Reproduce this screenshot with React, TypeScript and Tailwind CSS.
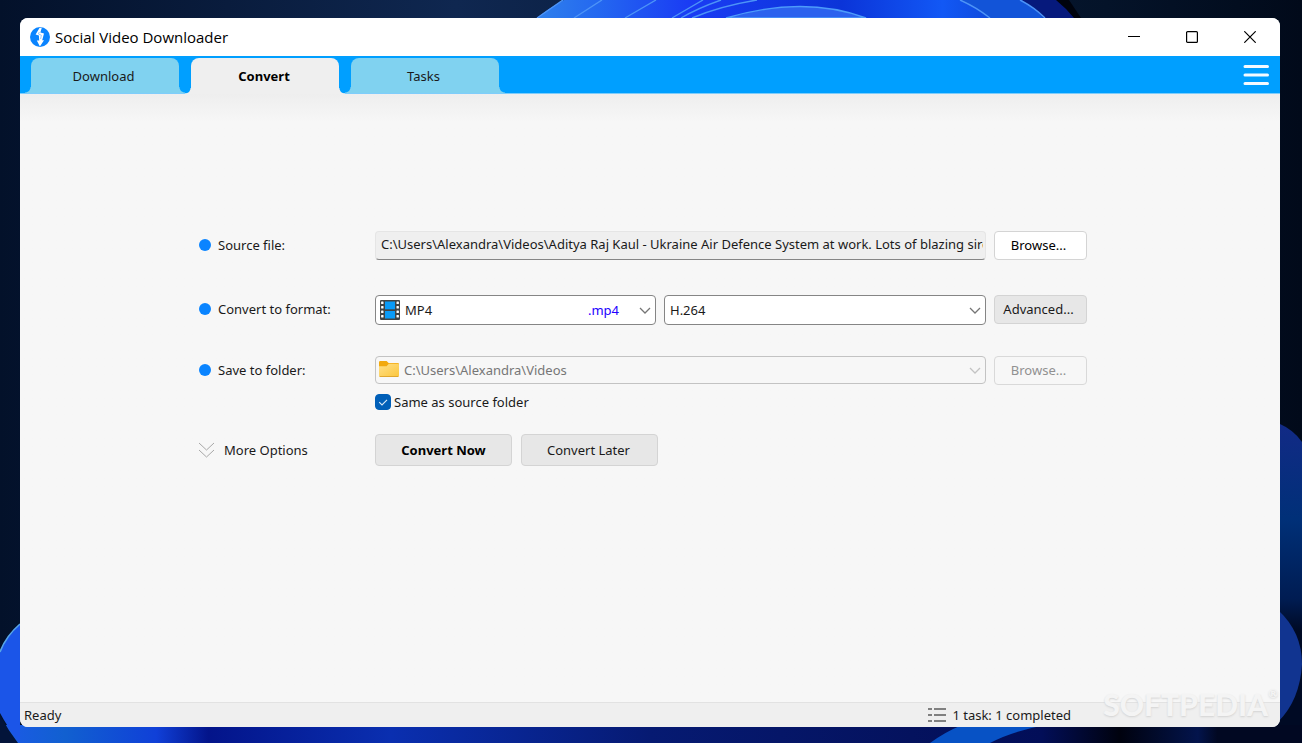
import { useState, type ReactNode } from "react";

const tabs = ["Download", "Convert", "Tasks"];

function Wallpaper() {
  return (
    <svg
      className="absolute inset-0 h-full w-full"
      viewBox="0 0 1302 743"
      preserveAspectRatio="none"
      aria-hidden="true"
    >
      <defs>
        <linearGradient id="night" x1="0" x2="1" y1="0" y2="0">
          <stop offset="0" stopColor="#03112a" />
          <stop offset="0.35" stopColor="#0f2750" />
          <stop offset="0.55" stopColor="#0a1d3e" />
          <stop offset="0.85" stopColor="#041329" />
          <stop offset="1" stopColor="#010a1a" />
        </linearGradient>
        <linearGradient id="petal" x1="0" x2="1" y1="0" y2="0">
          <stop offset="0" stopColor="#2f80ec" />
          <stop offset="0.12" stopColor="#2468f0" />
          <stop offset="0.3" stopColor="#1a3cf4" />
          <stop offset="0.6" stopColor="#0b34d8" />
          <stop offset="0.8" stopColor="#1258f5" />
          <stop offset="1" stopColor="#0b3ac0" />
        </linearGradient>
        <linearGradient id="floor" x1="0" x2="1" y1="0" y2="0">
          <stop offset="0" stopColor="#1c5ae8" />
          <stop offset="0.05" stopColor="#1160d0" />
          <stop offset="0.12" stopColor="#1040d8" />
          <stop offset="0.16" stopColor="#03148a" />
          <stop offset="0.3" stopColor="#0a2fb0" />
          <stop offset="0.5" stopColor="#061a72" />
          <stop offset="0.7" stopColor="#04125e" />
          <stop offset="0.8" stopColor="#020e58" />
          <stop offset="0.86" stopColor="#00020e" />
          <stop offset="0.92" stopColor="#03144c" />
          <stop offset="0.935" stopColor="#010822" />
          <stop offset="1" stopColor="#010822" />
        </linearGradient>
        <linearGradient id="side" x1="0" x2="0" y1="0" y2="1">
          <stop offset="0" stopColor="#122a86" />
          <stop offset="0.3" stopColor="#003078" />
          <stop offset="0.55" stopColor="#001c52" />
          <stop offset="0.65" stopColor="#000a24" />
          <stop offset="1" stopColor="#000a24" />
        </linearGradient>
      </defs>
      <rect width="1302" height="743" fill="url(#night)" />
      <path d="M1040 0h29l12 18h-41Z" fill="#00030d" />
      <path d="M1010 0h46q10 8 18 18h-60Z" fill="#06197c" />
      <path d="M537 18Q549 8 564 0h458q12 8 22 18Z" fill="url(#petal)" />
      <path d="M960 0q16 7 28 18h55Q1034 7 1020 0Z" fill="#1254d8" />
      <path
        d="M537 18 563 0M574 18 602 0M625 18 656 0M672 18 703 0M681 18Q698 8 721 0M692 18Q720 6 757 0M960 0q16 7 30 18M1020 0q14 7 25 18"
        fill="none"
        stroke="#4d94f7"
        strokeWidth="1.4"
      />
      <path d="M726 18Q804-5 866 18Z" fill="#2c62ee" stroke="#4d9cfa" strokeWidth="1.4" />
      <path d="M1278 423Q1294 430 1302 442V743H1278Z" fill="url(#side)" />
      <rect y="725" width="1302" height="18" fill="url(#floor)" />
      <path d="M1278 610Q1302 632 1302 664Q1300 700 1278 722Z" fill="#113490" />
      <path d="M20 624Q6 636 0 652V713Q8 728 20 743Z" fill="#1b55e8" />
      <path d="M20 624Q6 636 0 652" fill="none" stroke="#57a5e8" strokeWidth="1.6" />
      <path d="M0 715Q8 730 18 743H0Z" fill="#03143a" />
      <path d="M930 743Q945 732 962 725H1045Q1010 732 990 743Z" fill="#0752c5" />
    </svg>
  );
}

function AppLogo() {
  return (
    <svg className="h-5 w-5" viewBox="0 0 20 20" aria-hidden="true">
      <circle cx="10" cy="10" r="10" fill="#0a84ff" />
      <path
        d="M9.6 0.8 5.6 7.4 8.9 8.6 9.2 13.4H6.8L9.9 19.4 14 13.2H12.2L14 6.6 10.4 5.4 11.8.8Z"
        fill="#fff"
      />
      <path d="M9.3 5 8.4 7 11.4 8.2 10.6 12" fill="none" stroke="#8cc4ff" strokeWidth="0.9" />
    </svg>
  );
}

function FilmIcon() {
  const holes = [2, 6.5, 11, 15.5];
  return (
    <svg className="h-5 w-5" viewBox="0 0 20 20" aria-hidden="true">
      <rect width="20" height="20" rx="1" fill="#3f4446" />
      <rect x="5" y="1.5" width="10" height="7.8" fill="#0a9bf8" />
      <rect x="5" y="11" width="10" height="7.5" fill="#0a9bf8" />
      {holes.map((y) => (
        <g key={y} fill="#fff">
          <rect x="1.1" y={y - 0.6} width="2.4" height="2.6" rx="0.6" />
          <rect x="16.5" y={y - 0.6} width="2.4" height="2.6" rx="0.6" />
        </g>
      ))}
    </svg>
  );
}

function FolderIcon() {
  return (
    <svg className="h-5 w-5" viewBox="0 0 20 20" aria-hidden="true">
      <defs>
        <linearGradient id="folder" x1="0" x2="1" y1="0" y2="1">
          <stop offset="0" stopColor="#ffe08a" />
          <stop offset="1" stopColor="#fbc63c" />
        </linearGradient>
      </defs>
      <path d="M0 3.2Q0 2 1.2 2H7.6L9.6 4H18.8Q20 4 20 5.2V9H0Z" fill="#f2a90f" />
      <path
        d="M0 7.2H7.6L9.8 4.8H18.8Q20 4.8 20 6V16.6Q20 17.8 18.8 17.8H1.2Q0 17.8 0 16.6Z"
        fill="url(#folder)"
      />
      <path d="M.6 17.5H19.4" stroke="#d99a1b" strokeWidth="0.8" />
    </svg>
  );
}

function Chevron({ tone }: { tone: string }) {
  return (
    <svg
      className={`pointer-events-none absolute top-1/2 right-[5px] h-3 w-3 -translate-y-1/2 ${tone}`}
      viewBox="0 0 12 12"
      aria-hidden="true"
    >
      <path d="M1 4 6 9 11 4" fill="none" stroke="currentColor" strokeWidth="1.3" />
    </svg>
  );
}

function RowLabel({ htmlFor, children }: { htmlFor: string; children: ReactNode }) {
  return (
    <label htmlFor={htmlFor} className="flex items-center gap-[7px] pb-0.5 pl-px">
      <span className="h-3 w-3 rounded-full bg-[#0a84ff]" />
      {children}
    </label>
  );
}

export default function App() {
  const [active, setActive] = useState("Convert");
  const [same, setSame] = useState(true);

  return (
    <div className="relative flex min-h-screen flex-col pt-[18px] pr-[22px] pb-4 pl-5 font-['Noto_Sans',sans-serif] text-[13px] leading-5 text-[#1a1a1a]">
      <Wallpaper />
      <div className="relative flex flex-1 flex-col overflow-hidden rounded-lg bg-[#f7f7f7]">
        <header className="flex h-[38px] items-center justify-between bg-white pl-2.5">
          <div className="flex items-center gap-[5px]">
            <AppLogo />
            <h1 className="font-['Open_Sans','Noto_Sans',sans-serif] text-[15px] text-black">
              Social Video Downloader
            </h1>
          </div>
          <div className="flex pr-px text-black">
            <button type="button" aria-label="Minimize" className="flex h-8 w-[58px] items-center justify-center">
              <svg className="h-3 w-3" viewBox="0 0 12 12">
                <path d="M0 5.5H12" stroke="currentColor" />
              </svg>
            </button>
            <button type="button" aria-label="Maximize" className="flex h-8 w-[58px] items-center justify-center">
              <svg className="h-3 w-3" viewBox="0 0 12 12">
                <rect x="0.6" y="0.6" width="10.8" height="10.8" rx="1" fill="none" stroke="currentColor" strokeWidth="1.2" />
              </svg>
            </button>
            <button type="button" aria-label="Close" className="flex h-8 w-[58px] items-center justify-center">
              <svg className="h-3 w-3" viewBox="0 0 12 12">
                <path d="M0.3 0.3 11.7 11.7M11.7 0.3 0.3 11.7" stroke="currentColor" strokeWidth="1.2" />
              </svg>
            </button>
          </div>
        </header>

        <nav className="flex h-[38px] items-end justify-between border-b border-[#7fcdfb] bg-[#009fff] pr-[11px] pl-[11px]">
          <div className="flex items-end gap-3" role="tablist">
            {tabs.map((tab) => {
              const on = tab === active;
              return (
                <button
                  key={tab}
                  type="button"
                  role="tab"
                  aria-selected={on}
                  onClick={() => setActive(tab)}
                  className={`relative w-[148px] rounded-t-lg ${
                    on ? "-mb-px h-9 bg-[#efefef] pr-0.5 font-bold text-black" : "h-[35px] bg-[#80d2f0] pr-[3px]"
                  }`}
                >
                  <span
                    className={`absolute bottom-0 -left-[6px] h-[6px] w-[6px] ${
                      on
                        ? "bg-[radial-gradient(circle_at_top_left,transparent_5px,#efefef_6px)]"
                        : "bg-[radial-gradient(circle_at_top_left,transparent_5px,#80d2f0_6px)]"
                    }`}
                  />
                  {tab}
                  <span
                    className={`absolute -right-[6px] bottom-0 h-[6px] w-[6px] ${
                      on
                        ? "bg-[radial-gradient(circle_at_top_right,transparent_5px,#efefef_6px)]"
                        : "bg-[radial-gradient(circle_at_top_right,transparent_5px,#80d2f0_6px)]"
                    }`}
                  />
                </button>
              );
            })}
          </div>
          <button type="button" aria-label="Menu" className="flex h-full items-center">
            <svg className="h-[22px] w-[26px]" viewBox="0 0 26 22">
              <path d="M2 2.5H24.5M2 11H24.5M2 19.5H24.5" stroke="#f4faff" strokeWidth="3" strokeLinecap="round" />
            </svg>
          </button>
        </nav>

        <main className="flex-1 bg-linear-to-b from-[#eeeeee] to-[#f7f7f7] to-[28px] pt-[137px] pr-[193px] pb-10 pl-[178px]">
          <form className="flex flex-col" onSubmit={(e) => e.preventDefault()}>
            <div className="grid h-[29px] grid-cols-[169px_1fr_93px] gap-2">
              <RowLabel htmlFor="source">Source file:</RowLabel>
              <input
                id="source"
                readOnly
                value="C:\Users\Alexandra\Videos\Aditya Raj Kaul - Ukraine Air Defence System at work. Lots of blazing sirens and explosions.mp4"
                className="min-w-0 rounded-sm border border-[#e5e5e5] border-b-[#858585] bg-[#efefef] pr-0.5 pb-1 pl-[5px] outline-none"
              />
              <button type="button" className="rounded border border-[#d4d4d4] bg-white pr-1 pb-0.5 text-black">
                Browse...
              </button>
            </div>

            <div className="mt-[35px] grid h-[30px] grid-cols-[169px_1fr_93px] gap-2">
              <RowLabel htmlFor="format">Convert to format:</RowLabel>
              <div className="grid grid-cols-[281fr_322fr] gap-2">
                <div className="relative">
                  <select
                    id="format"
                    defaultValue="MP4"
                    className="h-full w-full appearance-none rounded-sm border border-[#858585] bg-white pl-[29px] outline-none"
                  >
                    <option>MP4</option>
                  </select>
                  <span className="pointer-events-none absolute top-[5px] left-[5px]">
                    <FilmIcon />
                  </span>
                  <span className="pointer-events-none absolute top-[5px] right-[37px] text-[#2200ff]">.mp4</span>
                  <Chevron tone="text-[#757575]" />
                </div>
                <div className="relative">
                  <select
                    aria-label="Codec"
                    defaultValue="H.264"
                    className="h-full w-full appearance-none rounded-sm border border-[#858585] bg-white pl-[5px] outline-none"
                  >
                    <option>H.264</option>
                  </select>
                  <Chevron tone="text-[#757575]" />
                </div>
              </div>
              <button type="button" className="h-[29px] rounded border border-[#d4d4d4] bg-[#e7e7e7] pr-1 pb-0.5">
                Advanced...
              </button>
            </div>

            <div className="mt-[31px] grid h-[29px] grid-cols-[169px_1fr_93px] gap-2">
              <RowLabel htmlFor="folder-path">Save to folder:</RowLabel>
              <div className="relative h-7">
                <select
                  id="folder-path"
                  disabled
                  className="h-full w-full appearance-none rounded-sm border border-[#c3c3c3] bg-[#f7f7f7] pl-7 text-[#767676] opacity-100"
                >
                  <option>C:\Users\Alexandra\Videos</option>
                </select>
                <span className="pointer-events-none absolute top-[3px] left-1">
                  <FolderIcon />
                </span>
                <Chevron tone="text-[#c3c3c3]" />
              </div>
              <button
                type="button"
                disabled
                className="rounded border border-[#d9d9d9] bg-[#f7f7f7] pr-1 pb-0.5 text-[#919191]"
              >
                Browse...
              </button>
            </div>

            <label className="mt-[7px] ml-[177px] flex items-center gap-[3px] self-start">
              <span className="relative flex">
                <input
                  type="checkbox"
                  checked={same}
                  onChange={(e) => setSame(e.target.checked)}
                  className="peer h-4 w-4 appearance-none rounded border border-[#005fb8] bg-white checked:bg-[#005fb8]"
                />
                <svg className="pointer-events-none absolute inset-0 h-4 w-4" viewBox="0 0 16 16" aria-hidden="true">
                  <path d="M4.2 8.2 7 11 12 5.8" fill="none" stroke="#d5e8f8" strokeWidth="1.1" />
                </svg>
              </span>
              Same as source folder
            </label>

            <div className="mt-[22px] grid grid-cols-[169px_1fr] gap-2">
              <button type="button" className="flex items-center gap-[9px]">
                <svg className="h-4 w-[17px]" viewBox="0 0 17 16" aria-hidden="true">
                  <path d="M1 1 8.5 8 16 1M1 8 8.5 15 16 8" fill="none" stroke="#a8a8a8" strokeWidth="1" />
                </svg>
                More Options
              </button>
              <div className="flex gap-[9px]">
                <button
                  type="submit"
                  className="h-8 w-[137px] rounded border border-[#d4d4d4] bg-[#e7e7e7] font-bold text-black"
                >
                  Convert Now
                </button>
                <button type="button" className="h-8 w-[137px] rounded border border-[#d4d4d4] bg-[#e7e7e7] pr-0.5">
                  Convert Later
                </button>
              </div>
            </div>
          </form>
        </main>

        <footer className="relative flex h-[25px] items-center justify-between border-t border-[#e2e2e2] bg-[#efefef] pr-[209px] pl-1">
          <span>Ready</span>
          <span className="flex items-center gap-1.5">
            <svg className="h-4 w-[18px]" viewBox="0 0 18 16" aria-hidden="true">
              <path d="M0 2H4M6 2H18M0 8H4M6 8H18M0 14H4M6 14H18" stroke="#808080" strokeWidth="2" />
            </svg>
            1 task: 1 completed
          </span>
          <span className="pointer-events-none absolute right-0.5 bottom-[5px] flex font-['Lato',sans-serif] text-[30px] leading-9 font-black text-[#f4f4f4] [text-shadow:0_1px_2px_#d2d2d2]">
            SOFTPEDIA
            <span className="text-xs leading-4">®</span>
          </span>
        </footer>
      </div>
    </div>
  );
}
